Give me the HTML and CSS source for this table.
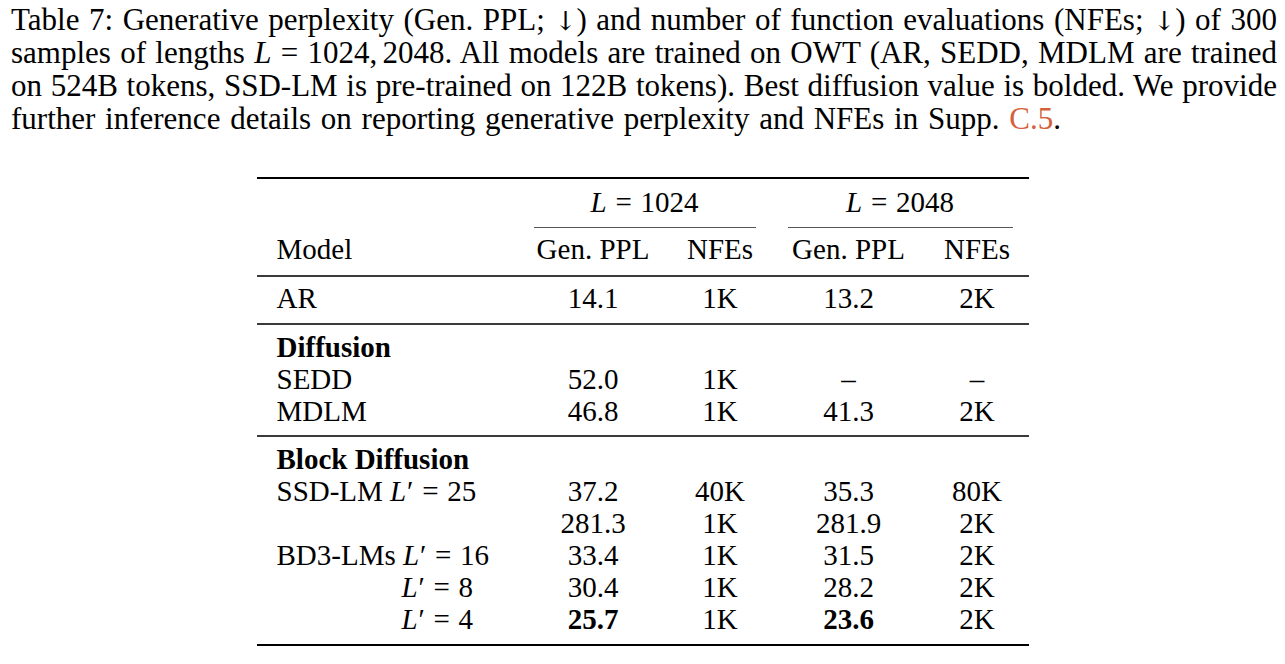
FILE: index.html
```html
<!DOCTYPE html>
<html lang="en">
<head>
<meta charset="utf-8">
<title>Table 7</title>
<link rel="stylesheet" href="styles.css">
</head>
<body>
<div class="page">
  <p class="caption">
    <span class="line">Table 7: Generative perplexity (Gen. PPL; <span class="arrow">↓</span>) and number of function evaluations (NFEs; <span class="arrow">↓</span>) of 300</span>
    <span class="line">samples of lengths <span class="math"><i>L</i><span class="rel">=</span>1024,<span class="thin"></span>2048</span>. All models are trained on OWT (AR, SEDD, MDLM are trained</span>
    <span class="line">on 524B tokens, SSD-LM is pre-trained on 122B tokens). Best diffusion value is bolded. We provide</span>
    <span class="line last">further inference details on reporting generative perplexity and NFEs in Supp. <span class="ref">C.5</span>.</span>
  </p>

  <table class="results">
    <colgroup>
      <col class="c-model">
      <col class="c-ppl">
      <col class="c-nfe">
      <col class="c-ppl2">
      <col class="c-nfe2">
    </colgroup>
    <thead>
      <tr class="groups">
        <td></td>
        <td colspan="2" class="group"><div class="grp"><span class="math"><i>L</i><span class="rel">=</span>1024</span></div></td>
        <td colspan="2" class="group"><div class="grp"><span class="math"><i>L</i><span class="rel">=</span>2048</span></div></td>
      </tr>
      <tr class="cols">
        <td class="label">Model</td>
        <td>Gen. PPL</td>
        <td>NFEs</td>
        <td>Gen. PPL</td>
        <td>NFEs</td>
      </tr>
    </thead>
    <tbody>
      <tr class="ar">
        <td class="label">AR</td>
        <td>14.1</td><td>1K</td><td>13.2</td><td>2K</td>
      </tr>
    </tbody>
    <tbody>
      <tr class="sec-first">
        <td class="label"><b>Diffusion</b></td>
        <td></td><td></td><td></td><td></td>
      </tr>
      <tr>
        <td class="label">SEDD</td>
        <td>52.0</td><td>1K</td><td>–</td><td>–</td>
      </tr>
      <tr class="sec-last">
        <td class="label">MDLM</td>
        <td>46.8</td><td>1K</td><td>41.3</td><td>2K</td>
      </tr>
    </tbody>
    <tbody>
      <tr class="sec-first">
        <td class="label"><b>Block Diffusion</b></td>
        <td></td><td></td><td></td><td></td>
      </tr>
      <tr>
        <td class="label">SSD-LM <span class="math"><i>L</i><span class="prime">′</span><span class="rel">=</span>25</span></td>
        <td>37.2</td><td>40K</td><td>35.3</td><td>80K</td>
      </tr>
      <tr>
        <td class="label"></td>
        <td>281.3</td><td>1K</td><td>281.9</td><td>2K</td>
      </tr>
      <tr>
        <td class="label">BD3-LMs <span class="math"><i>L</i><span class="prime">′</span><span class="rel">=</span>16</span></td>
        <td>33.4</td><td>1K</td><td>31.5</td><td>2K</td>
      </tr>
      <tr>
        <td class="label indent"><span class="math"><i>L</i><span class="prime">′</span><span class="rel">=</span>8</span></td>
        <td>30.4</td><td>1K</td><td>28.2</td><td>2K</td>
      </tr>
      <tr class="table-last">
        <td class="label indent"><span class="math"><i>L</i><span class="prime">′</span><span class="rel">=</span>4</span></td>
        <td><b>25.7</b></td><td>1K</td><td><b>23.6</b></td><td>2K</td>
      </tr>
    </tbody>
  </table>
</div>
</body>
</html>
```

FILE: styles.css
```css
html, body {
  margin: 0;
  padding: 0;
  background: #fff;
}

body {
  font-family: "Liberation Serif", "Times New Roman", serif;
  color: #000;
}

.page {
  display: flex;
  flex-direction: column;
}

.caption {
  margin: 0;
  padding: 3px 8px 0 11px;
  font-size: 31px;
  line-height: 33px;
}

.caption .line {
  display: block;
  white-space: nowrap;
  text-align: justify;
  text-align-last: justify;
}

.caption .line.last {
  text-align-last: left;
  word-spacing: 2px;
}

.arrow {
  font-family: "DejaVu Serif", serif;
  font-size: 0.85em;
  line-height: 0;
}

.ref {
  color: #d5603a;
}

.math i {
  font-style: italic;
}

.rel {
  margin: 0 0.3em;
}

.thin {
  display: inline-block;
  width: 0.17em;
}

.prime {
  margin-left: 0.03em;
}

.results {
  margin: 42px auto 0;
  border-collapse: separate;
  border-spacing: 0;
  table-layout: fixed;
  width: 772px;
  font-size: 29px;
  line-height: 32px;
  border-top: 2px solid #000;
  border-bottom: 2px solid #000;
}

.c-model { width: 261px; }
.c-ppl { width: 151px; }
.c-nfe { width: 103px; }
.c-ppl2 { width: 154px; }
.c-nfe2 { width: 103px; }

.results td {
  padding: 0;
  text-align: center;
  white-space: nowrap;
  vertical-align: top;
}

.results td.label {
  text-align: left;
  padding-left: 20px;
}

.results td.indent {
  padding-left: 145px;
}

.groups td {
  padding-top: 7px;
}

.group {
  padding-left: 16px !important;
  padding-right: 16px !important;
}

.grp {
  padding-bottom: 9px;
  border-bottom: 1px solid #555;
}

.results tr.cols td {
  padding-top: 5px;
  padding-bottom: 10px;
  border-bottom: 2px solid #3a3a3a;
}

.results tr.ar td {
  padding-top: 5px;
  padding-bottom: 9px;
  border-bottom: 2px solid #3a3a3a;
}

.results tr.sec-first td {
  padding-top: 6px;
}

.results tr.sec-last td {
  padding-bottom: 8px;
  border-bottom: 2px solid #3a3a3a;
}

.results tr.table-last td {
  padding-bottom: 9px;
}
```
